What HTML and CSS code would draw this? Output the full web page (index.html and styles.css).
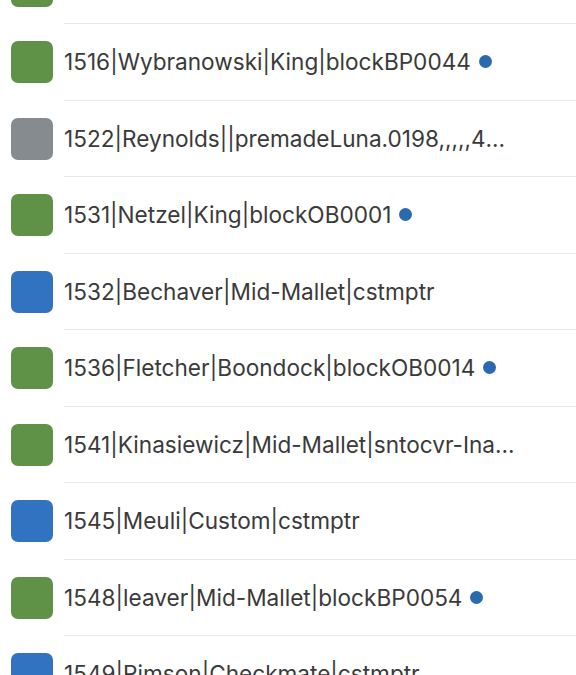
FILE: index.html
```html
<!DOCTYPE html>
<html lang="en">
<head>
    <meta charset="utf-8">
    <meta name="viewport" content="width=device-width, initial-scale=1">
    <title>Orders</title>
    <link rel="stylesheet" href="styles.css">
</head>
<body>
    <div class="list">
        <div class="row">
            <div class="swatch green"></div>
            <div class="cell"><span class="label">1512|Placeholder|King|blockBP0040</span></div>
        </div>
        <div class="row">
            <div class="swatch green"></div>
            <div class="cell"><span class="label">1516|Wybranowski|King|blockBP0044</span><span class="dot"></span></div>
        </div>
        <div class="row">
            <div class="swatch gray"></div>
            <div class="cell"><span class="label">1522|Reynolds||premadeLuna.0198,,,,,4Mallet</span></div>
        </div>
        <div class="row">
            <div class="swatch green"></div>
            <div class="cell"><span class="label">1531|Netzel|King|blockOB0001</span><span class="dot"></span></div>
        </div>
        <div class="row">
            <div class="swatch blue"></div>
            <div class="cell"><span class="label">1532|Bechaver|Mid-Mallet|cstmptr</span></div>
        </div>
        <div class="row">
            <div class="swatch green"></div>
            <div class="cell"><span class="label">1536|Fletcher|Boondock|blockOB0014</span><span class="dot"></span></div>
        </div>
        <div class="row">
            <div class="swatch green"></div>
            <div class="cell"><span class="label">1541|Kinasiewicz|Mid-Mallet|sntocvr-Inanna</span></div>
        </div>
        <div class="row">
            <div class="swatch blue"></div>
            <div class="cell"><span class="label">1545|Meuli|Custom|cstmptr</span></div>
        </div>
        <div class="row">
            <div class="swatch green"></div>
            <div class="cell"><span class="label">1548|leaver|Mid-Mallet|blockBP0054</span><span class="dot"></span></div>
        </div>
        <div class="row">
            <div class="swatch blue"></div>
            <div class="cell"><span class="label">1549|Rimson|Checkmate|cstmptr</span></div>
        </div>
    </div>
</body>
</html>
```

FILE: styles.css
```css
body {
    margin: 0;
    background: #fff;
    font-family: Inter, "Noto Sans", sans-serif;
    color: #3a3a3a;
    overflow: hidden;
}
.list {
    margin-top: -52.5px;
}
.row {
    display: flex;
    align-items: center;
    height: 76.5px;
}
.swatch {
    flex: none;
    width: 42px;
    height: 42px;
    margin: 0 11px;
    border-radius: 7px;
}
.green {
    background: #5f9146;
}
.gray {
    background: #858b8f;
}
.blue {
    background: #3173c0;
}
.cell {
    flex: 1;
    align-self: stretch;
    display: flex;
    align-items: center;
    min-width: 0;
    padding-right: 60px;
    border-bottom: 1px solid #e8e8e8;
}
.label {
    font-size: 22.6px;
    white-space: nowrap;
    overflow: hidden;
    text-overflow: ellipsis;
}
.dot {
    flex: none;
    width: 13px;
    height: 13px;
    margin-left: 8px;
    border-radius: 50%;
    background: #2c6aaf;
}
```
